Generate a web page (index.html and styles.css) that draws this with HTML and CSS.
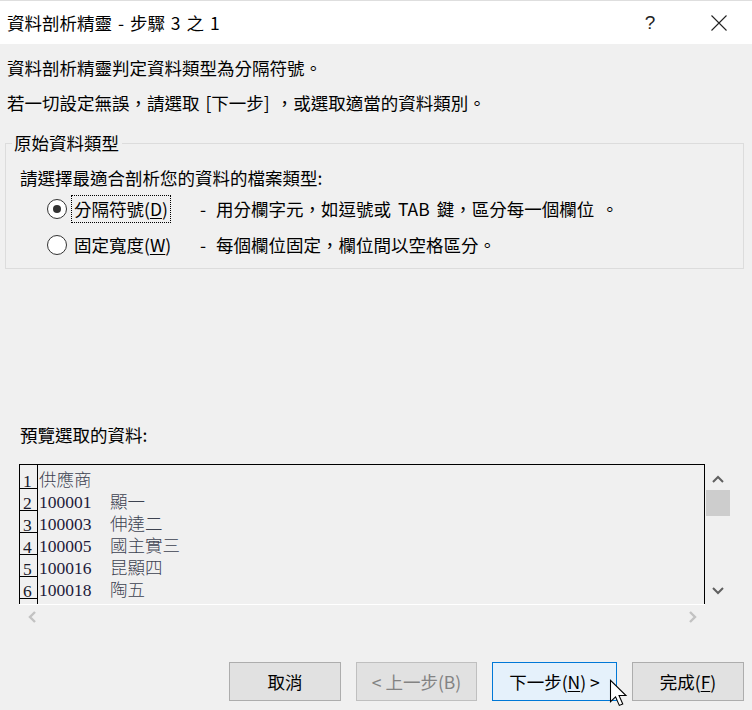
FILE: index.html
```html
<!DOCTYPE html>
<html lang="zh-Hant">
<head>
<meta charset="utf-8">
<title>資料剖析精靈</title>
<link rel="stylesheet" href="styles.css">
</head>
<body>
<div class="dialog">
  <header class="titlebar">
    <div class="title">資料剖析精靈 - 步驟 3 之 1</div>
    <div class="tb-btn help">?</div>
    <div class="tb-btn close">
      <svg width="16" height="16" viewBox="0 0 16 16"><path d="M0.5 0.5 L15.5 15.5 M15.5 0.5 L0.5 15.5" stroke="#222" stroke-width="1.1" fill="none"/></svg>
    </div>
  </header>

  <main class="content">
    <p class="line l1">資料剖析精靈判定資料類型為分隔符號。</p>
    <p class="line l2">若一切設定無誤，請選取 [下一步] ，或選取適當的資料類別。</p>

    <fieldset class="group">
      <legend>原始資料類型</legend>
      <div class="group-body">
        <div class="prompt">請選擇最適合剖析您的資料的檔案類型:</div>
        <div class="radio-row r1">
          <span class="radio checked"></span>
          <span class="rlabel"><span class="focus on">分隔符號(<u>D</u>)</span></span>
          <span class="desc"><span class="dash">-</span>用分欄字元，如逗號或 TAB 鍵，區分每一個欄位 。</span>
        </div>
        <div class="radio-row r2">
          <span class="radio"></span>
          <span class="rlabel"><span class="focus">固定寬度(<u>W</u>)</span></span>
          <span class="desc"><span class="dash">-</span>每個欄位固定，欄位間以空格區分。</span>
        </div>
      </div>
    </fieldset>

    <div class="plabel">預覽選取的資料:</div>

    <div class="preview">
      <div class="table">
        <div class="row first"><div class="num">1</div><div class="data"><span class="cjk">供應商</span></div></div>
        <div class="row"><div class="num">2</div><div class="data"><span class="c1">100001</span><span class="cjk">顯一</span></div></div>
        <div class="row"><div class="num">3</div><div class="data"><span class="c1">100003</span><span class="cjk">伸達二</span></div></div>
        <div class="row"><div class="num">4</div><div class="data"><span class="c1">100005</span><span class="cjk">國主實三</span></div></div>
        <div class="row"><div class="num">5</div><div class="data"><span class="c1">100016</span><span class="cjk">昆顯四</span></div></div>
        <div class="row"><div class="num">6</div><div class="data"><span class="c1">100018</span><span class="cjk">陶五</span></div></div>
        <div class="row"><div class="num"></div><div class="data"></div></div>
      </div>
      <div class="vscroll">
        <div class="vbtn up"><svg width="12" height="8" viewBox="0 0 12 8"><path d="M1 7 L6 2 L11 7" stroke="#606060" stroke-width="2" fill="none"/></svg></div>
        <div class="thumb"></div>
        <div class="spacer"></div>
        <div class="vbtn down"><svg width="12" height="8" viewBox="0 0 12 8"><path d="M1 1 L6 6 L11 1" stroke="#606060" stroke-width="2" fill="none"/></svg></div>
      </div>
      <div class="hscroll">
        <svg width="10" height="12" viewBox="0 0 10 12"><path d="M8 1 L3 6 L8 11" stroke="#c2c2c2" stroke-width="2.4" fill="none"/></svg>
        <svg width="10" height="12" viewBox="0 0 10 12"><path d="M2 1 L7 6 L2 11" stroke="#c2c2c2" stroke-width="2.4" fill="none"/></svg>
      </div>
    </div>

    <div class="buttons">
      <div class="btn cancel">取消</div>
      <div class="btn back disabled">&lt; 上一步(B)</div>
      <div class="btn next default">下一步(<u>N</u>) &gt;</div>
      <div class="btn finish">完成(<u>F</u>)</div>
    </div>
  </main>

  <svg class="cursor" width="19" height="28" viewBox="0 0 14 21">
    <path d="M1 1 V17 L4.8 13.4 L7.6 19.8 L10.2 18.7 L7.4 12.4 L12.6 12.4 Z" fill="#fff" stroke="#000" stroke-width="0.8" stroke-linejoin="miter"/>
  </svg>
</div>
</body>
</html>
```

FILE: styles.css
```css
* { box-sizing: border-box; }

html, body {
  margin: 0;
  padding: 0;
}

body {
  width: 752px;
  height: 710px;
  overflow: hidden;
  background: #f0f0f0;
  font-family: "Noto Sans CJK TC", "Noto Sans", sans-serif;
  font-size: 17.5px;
  color: #000;
}

.dialog {
  position: relative;
  width: 752px;
  height: 710px;
}

/* title bar */
.titlebar {
  height: 44px;
  background: #fff;
  border-top: 1px solid #dedede;
  display: flex;
  align-items: center;
}

.title {
  flex: 1;
  padding-left: 7px;
  line-height: 43px;
  word-spacing: 2px;
}

.tb-btn {
  width: 46px;
  display: flex;
  justify-content: center;
  align-items: center;
}

.help {
  margin-right: 23px;
  font-family: "Liberation Sans", sans-serif;
  font-size: 19px;
  color: #222;
  line-height: 43px;
}

.close {
  margin-right: 10px;
}

/* content */
.content {
  padding: 0 8px 0 5px;
}

.line {
  margin: 0;
  padding-left: 2px;
  line-height: 24px;
}

.l1 { margin-top: 12px; }
.l2 { margin-top: 11px; word-spacing: 2px; }

.group {
  margin: 16px 0 0;
  padding: 0;
  border: 1px solid #dcdcdc;
  min-width: 0;
}

.group legend {
  margin-left: 6px;
  padding: 0 3px 0 2px;
  line-height: 24px;
}

.group-body {
  padding: 11px 0 9px 14px;
}

.prompt {
  line-height: 24px;
}

.radio-row {
  display: flex;
  align-items: center;
  height: 28px;
  margin-left: 27px;
  line-height: 24px;
}

.r1 { margin-top: 5px; }
.r2 { margin-top: 8px; }

.radio {
  flex: none;
  width: 20px;
  height: 20px;
  border: 1px solid #333;
  border-radius: 50%;
  background: #fff;
  margin-right: 4px;
  display: flex;
  align-items: center;
  justify-content: center;
}

.radio.checked::after {
  content: "";
  width: 8px;
  height: 8px;
  border-radius: 50%;
  background: #333;
}

.rlabel {
  flex: none;
  width: 126px;
}

.focus {
  display: inline-block;
  border: 1px dotted transparent;
  padding: 1px 2px;
}

.focus.on {
  border-color: #000;
}

u {
  text-decoration-thickness: 1px;
  text-underline-offset: 2px;
}

.dash {
  display: inline-block;
  width: 19px;
  padding-left: 3px;
}

.desc {
  word-spacing: 3px;
}

/* preview */
.plabel {
  margin-top: 154px;
  padding-left: 15px;
  line-height: 24px;
}

.preview {
  margin: 17px 0 0 14px;
  width: 712px;
  display: grid;
  grid-template-columns: 686px 26px;
  grid-template-rows: 140px 24px;
}

.table {
  border: 1px solid #000;
  border-bottom: 0;
  overflow: hidden;
  font-family: "Liberation Serif", "Noto Sans CJK TC", serif;
  font-size: 17.5px;
  color: #222;
}

.row {
  display: flex;
  height: 22px;
}

.row.first {
  height: 24px;
}

.num {
  flex: none;
  width: 18px;
  border-right: 1px solid #000;
  border-bottom: 1px solid #000;
  padding: 7px 0 0 3px;
  line-height: 14px;
  color: #1a1a2a;
}

.row.first .num {
  padding-top: 9px;
}

.data {
  padding: 5px 0 0 1px;
  line-height: 16px;
  white-space: nowrap;
}

.row.first .data {
  padding-top: 7px;
}

.c1 {
  display: inline-block;
  width: 71px;
  color: #1e1a3a;
}

.cjk {
  font-weight: 300;
  color: #3d4250;
}

.vscroll {
  display: flex;
  flex-direction: column;
  align-items: center;
}

.vbtn {
  width: 100%;
  height: 26px;
  display: flex;
  align-items: center;
  justify-content: center;
}

.vbtn.up {
  padding-top: 3px;
}

.thumb {
  width: 24px;
  height: 26px;
  background: #cdcdcd;
}

.spacer {
  flex: 1;
}

.hscroll {
  border-top: 1px solid #fff;
  display: flex;
  justify-content: space-between;
  align-items: center;
  padding: 0 7px 0 8px;
}

/* buttons */
.buttons {
  display: flex;
  justify-content: flex-end;
  gap: 15px;
  margin-top: 34px;
}

.btn {
  height: 39px;
  background: #e1e1e1;
  border: 1px solid #adadad;
  display: flex;
  align-items: center;
  justify-content: center;
  line-height: 24px;
}

.cancel { width: 112px; }
.back { width: 121px; }
.next { width: 125px; }
.finish { width: 112px; }

.btn.disabled {
  border-color: #bfbfbf;
  color: #838383;
}

.btn.default {
  background: #e5f1fb;
  border-color: #0078d7;
}

.cursor {
  position: absolute;
  left: 609px;
  top: 679px;
}
```
